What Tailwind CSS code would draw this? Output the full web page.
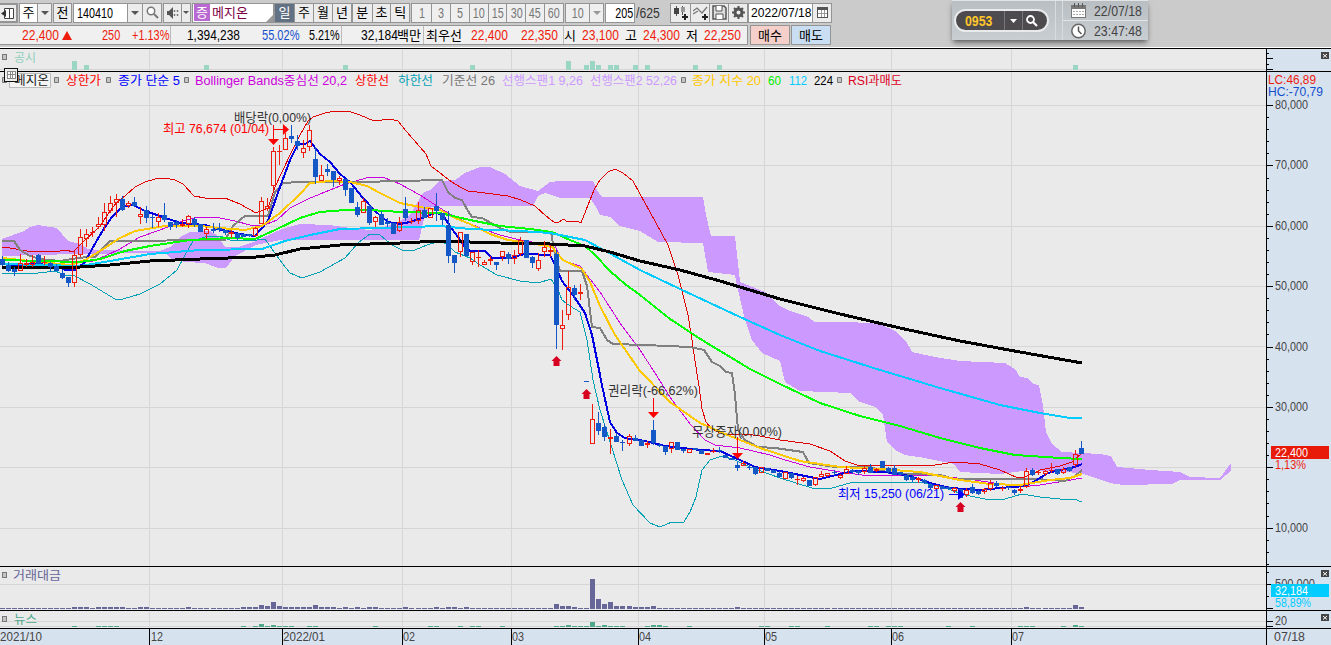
<!DOCTYPE html>
<html lang="ko">
<head>
    <meta charset="UTF-8">
    <title>메지온 140410</title>
    <script src="https://cdn.jsdelivr.net/npm/@tailwindcss/browser@4"></script>
</head>
<body class="w-[1331px] h-[645px] overflow-hidden bg-[#cbcbcb] font-['Liberation_Sans','Noto_Sans_CJK_KR',sans-serif] text-black">
<div class="relative flex flex-col w-[1331px] h-[645px]">

    <!-- Toolbar -->
    <div class="flex items-center h-6 pt-px text-[13px] leading-none whitespace-nowrap">
        <div class="flex items-center justify-center w-[18px] h-5 border-2 border-l-0 border-[#949494] bg-[#ececec]">
            <svg width="14" height="14" viewBox="0 0 14 14"><path d="M3.5 2.5h9v10h-9zM8.5 2.5v10" fill="#fff" stroke="#444"/><path d="M5 4v7L0 7.500z" fill="#333"/></svg>
        </div>
        <div class="flex ml-px w-[33px] h-5 border border-[#949494] bg-[#ececec]">
            <div class="flex items-center justify-center w-[18px] bg-white border-r border-[#949494]">주</div>
            <div class="flex flex-1 items-center justify-center"><svg width="8" height="4"><path d="M0 0h8L4 4z" fill="#555"/></svg></div>
        </div>
        <div class="flex items-center justify-center ml-px w-[19px] h-5 border border-[#949494] bg-[#ececec]">전</div>
        <div class="flex ml-px w-[89px] h-5 border border-[#949494] bg-[#ececec]">
            <div class="flex items-center w-[54px] pl-[3px] bg-white border-r border-[#949494]"><span class="origin-left scale-x-[.77] text-[14px]">140410</span></div>
            <div class="flex w-[15px] items-center justify-center border-r border-[#949494]"><svg width="8" height="4"><path d="M0 0h8L4 4z" fill="#555"/></svg></div>
            <div class="flex flex-1 items-center justify-center"><svg width="13" height="13"><circle cx="5" cy="5" r="3.700" fill="#fff" stroke="#777" stroke-width="1.500"/><path d="M8 8l4 4" stroke="#777" stroke-width="2"/></svg></div>
        </div>
        <div class="flex ml-px w-[28px] h-5 border border-[#949494] bg-[#ececec]">
            <div class="flex items-center justify-center w-[18px] border-r border-[#949494]"><svg width="13" height="12"><path d="M1 4h2l4-4v12L3 8H1z" fill="#555"/><path d="M8.500 3v2M8.500 7v2M11.500 3v2M11.500 7v2" stroke="#777" stroke-width="1.500"/></svg></div>
            <div class="flex flex-1 items-center justify-center"><svg width="6" height="3"><path d="M0 0h6L3 3z" fill="#555"/></svg></div>
        </div>
        <div class="relative flex items-center ml-px w-[82px] h-5 border border-[#949494] bg-white">
            <div class="flex items-center justify-center ml-px w-4 h-[17px] bg-[#b86ad2] text-white">증</div>
            <span class="ml-[2px] text-[#7b0042]">메지온</span>
            <svg class="absolute right-0 bottom-0" width="7" height="7"><path d="M7 0v7H0z" fill="#999"/></svg>
        </div>
        <div class="grid grid-cols-4 w-[78px] h-5 border border-[#949494] bg-[#ececec]">
            <div class="flex items-center justify-center bg-[#637184] text-white">일</div>
            <div class="flex items-center justify-center border-l border-[#949494]">주</div>
            <div class="flex items-center justify-center border-l border-[#949494]">월</div>
            <div class="flex items-center justify-center border-l border-[#949494]">년</div>
        </div>
        <div class="grid grid-cols-3 w-[58px] h-5 border border-[#949494] bg-[#ececec]">
            <div class="flex items-center justify-center">분</div>
            <div class="flex items-center justify-center border-l border-[#949494]">초</div>
            <div class="flex items-center justify-center border-l border-[#949494]">틱</div>
        </div>
        <div id="minutes" class="grid grid-cols-8 ml-px w-[153px] h-5 border border-[#949494] bg-[#efefef] text-[14px] text-[#777]"></div>
        <div class="flex ml-px w-[39px] h-5 border border-[#949494] bg-[#efefef] text-[#777]">
            <div class="flex items-center justify-center w-[24px] border-r border-[#949494]"><span class="scale-x-[.77] text-[14px]">10</span></div>
            <div class="flex flex-1 items-center justify-center"><svg width="8" height="4"><path d="M0 0h8L4 4z" fill="#999"/></svg></div>
        </div>
        <div class="flex items-center justify-end ml-px w-[30px] h-5 pr-px border border-[#949494] bg-white"><span class="origin-right scale-x-[.77] text-[14px]">205</span></div>
        <div class="w-[35px] pl-px text-[14px] text-[#333]"><span class="inline-block origin-left scale-x-[.87]">/625</span></div>
        <div class="grid grid-cols-4 w-[78px] h-5 border border-[#949494] bg-[#ececec]">
            <div class="flex items-center justify-center"><svg width="15" height="14"><path d="M3.500 0v10M9.500 0v9" stroke="#555"/><path d="M1 2h5v6H1z" fill="#444"/><path d="M8 1h4v5H8z" fill="#999"/><path d="M12 8v6M9 11h6" stroke="#222" stroke-width="2"/></svg></div>
            <div class="flex items-center justify-center border-l border-[#949494]"><svg width="15" height="14"><path d="M0 5l4-3 5 5 5-6M0 8l5-3" fill="none" stroke="#777" stroke-width="1.200"/><path d="M12 8v6M9 11h6" stroke="#222" stroke-width="2"/></svg></div>
            <div class="flex items-center justify-center border-l border-[#949494]"><svg width="15" height="15"><path d="M1 1h11l2 2v11H1z" fill="#ddd" stroke="#555" stroke-width="1.500"/><path d="M4 1v5h6V1M4 14V9h7v5" fill="#fff" stroke="#555"/></svg></div>
            <div class="flex items-center justify-center border-l border-[#949494]"><svg width="13" height="13"><circle cx="6.500" cy="6.500" r="3.500" fill="none" stroke="#555" stroke-width="3"/><path d="M6.500 0v3M6.500 10v3M0 6.500h3M10 6.500h3M2 2l2 2M9 9l2 2M2 11l2-2M9 4l2-2" stroke="#555" stroke-width="2"/></svg></div>
        </div>
        <div class="flex w-[84px] h-5 border border-[#949494] bg-[#ececec]">
            <div class="flex items-center w-[64px] pl-[2px] bg-white border-r border-[#949494]"><span class="origin-left scale-x-[.93]">2022/07/18</span></div>
            <div class="flex flex-1 items-center justify-center"><svg width="11" height="11" shape-rendering="crispEdges"><path d="M0 0h11v11H0z" fill="#555"/><path d="M1 3h9v7H1z" fill="#fff"/><path d="M4 3v7M7 3v7M1 6h9" stroke="#999"/></svg></div>
        </div>
    </div>

    <!-- Quote row -->
    <div class="flex h-[23px] pt-px whitespace-nowrap text-[14px] leading-none">
        <div class="flex items-center w-[748px] h-5 border-y border-r border-[#949494] bg-[#f0f0f0] text-[#ee1c0c]">
            <div class="w-[62px] pl-[22px]"><span class="inline-block origin-left scale-x-[.86]">22,400</span></div>
            <div class="w-[40px]"><svg width="10" height="9"><path d="M5 0l5 9H0z" fill="#ee1c0c"/></svg></div>
            <div class="w-[30px]"><span class="inline-block origin-left scale-x-[.78]">250</span></div>
            <div class="flex items-center w-[39px] h-full border-r border-[#bbb]"><span class="origin-left scale-x-[.78]">+1.13%</span></div>
            <div class="w-[91px] pl-4 text-black"><span class="inline-block origin-left scale-x-[.85]">1,394,238</span></div>
            <div class="w-[47px] text-[#1550cc]"><span class="inline-block origin-left scale-x-[.79]">55.02%</span></div>
            <div class="flex items-center w-[33px] h-full border-r border-[#bbb] text-black"><span class="origin-left scale-x-[.77]">5.21%</span></div>
            <div class="flex items-center w-[82px] h-full pl-[19px] border-r border-[#bbb] text-black"><span class="w-9 origin-left scale-x-[.86]">32,184</span><span class="text-[13px]">백만</span></div>
            <div class="w-[47px] pl-[2px] text-[13px] text-black">최우선</div>
            <div class="w-[50px]"><span class="inline-block origin-left scale-x-[.86]">22,400</span></div>
            <div class="flex items-center w-[43px] h-full border-r border-[#bbb]"><span class="origin-left scale-x-[.86]">22,350</span></div>
            <div class="w-[18px] text-[13px] text-black">시</div>
            <div class="w-[43px]"><span class="inline-block origin-left scale-x-[.86]">23,100</span></div>
            <div class="w-[18px] text-[13px] text-black">고</div>
            <div class="w-[43px]"><span class="inline-block origin-left scale-x-[.86]">24,300</span></div>
            <div class="w-[18px] text-[13px] text-black">저</div>
            <div class="w-[43px]"><span class="inline-block origin-left scale-x-[.86]">22,250</span></div>
        </div>
        <div class="flex items-center justify-center ml-[2px] w-10 h-5 border border-[#949494] bg-[#f5cfc9] text-[13px]">매수</div>
        <div class="flex items-center justify-center ml-px w-10 h-5 border border-[#949494] bg-[#c9def3] text-[13px]">매도</div>
    </div>
    <div class="h-px bg-white"></div>

    <!-- Disclosure panel -->
    <svg class="block" width="1331" height="23" viewBox="0 48 1331 23">
        <path d="M0 48h1331v23H0z" fill="#eaeaea"/>
        <path d="M1266 48h65v23h-65z" fill="#d7e2ef"/>
        <g class="vgrid"></g>
        <path d="M0 69.500h1266" stroke="#d6d6d6"/>
        <g id="disclosure" fill="#9bd5c3" shape-rendering="crispEdges"></g>
        <path d="M0 48.500h1331M1266.500 48v23M1267 53.500h2M1267 58.500h6M1267 64.500h2M1267 69.500h6" stroke="#000" shape-rendering="crispEdges"/>
        <rect x="2.500" y="54.500" width="4" height="5" fill="#c4c4c4" stroke="#777"/>
        <text x="14" y="62" font-size="12" fill="#8fcfbc" textLength="22" lengthAdjust="spacingAndGlyphs">공시</text>
        <path d="M1321 52h8v7h-8z" fill="#444"/><path d="M1323 54l4 3.500m0-3.500l-4 3.500" stroke="#fff"/>
    </svg>

    <!-- Price panel -->
    <svg class="block" width="1331" height="495" viewBox="0 71 1331 495">
        <path d="M0 71h1331v495H0z" fill="#eaeaea"/>
        <path d="M1266 71h65v495h-65z" fill="#d7e2ef"/>
        <g class="vgrid"></g>
        <path d="M0 105.500h1266M0 165.500h1266M0 226.500h1266M0 286.500h1266M0 346.500h1266M0 407.500h1266M0 467.500h1266M0 528.500h1266" stroke="#d6d6d6" shape-rendering="crispEdges"/>

        <!-- Ichimoku cloud -->
        <g fill="#cc99ff" shape-rendering="crispEdges">
            <path d="M2 239L13 235 24 231 30 227 38 225 57 228 68 241 80 244 88 249 100 250 160 251 170 247 180 237 190 232 210 231 218 236 225 247 238 247 256 241 275 232 285 228 300 224 330 225 350 228 370 230 395 224 410 215 420 198 424 192 430 190 440 181 455 180 465 173 480 167 490 167 505 174 520 186 538 191 550 182 560 181 593 181 597 190 602 197 703 197 706 215 711 236 735 236 740 282 765 292 780 306 790 311 808 317 815 322 850 322 880 324 895 331 906 341 912 352 935 357 960 361 1005 363 1015 369 1020 377 1027 378 1033 384 1039 385 1043 405 1046 432 1052 444 1062 452 1100 454 1111 456 1117 467 1150 470 1180 472 1190 477 1220 478 1231 463V471L1220 480 1180 480 1172 484 1123 485 1110 483 1092 477 1080 473 1030 470 1000 474 960 472 954 464 925 458 905 455 895 450 887 442 883 414 875 407 860 402 850 393 800 391 785 382 780 361 762 353 752 340 745 320 738 290 735 275 708 272 703 243 658 242 640 231 620 226 610 217 600 215 596 207 590 198 560 198 545 193 538 196 533 206 435 206 429 208 424 219 419 240 280 240 256 245 235 256 226 268 218 268 205 263 185 262 172 259 165 253 75 254 2 256z"/>
        </g>

        <g fill="none" shape-rendering="crispEdges">
            <path stroke="#00a0b4" d="M2 273L30 274 55 271 65 275 75 276 90 284 105 293 115 299 123 299 140 294 160 284 177 270 185 255 193 241 205 237 220 236 230 240 250 241 265 239 272 249 282 263 290 273 302 278 320 272 345 258 358 243 370 234 380 235 392 245 402 250 415 250 427 245 440 241 448 245 455 252 470 258 480 265 497 275 520 281 538 283 551 279 558 290 562 300 570 306 580 312 587 340 593 380 600 410 611 445 622 480 633 505 650 523 660 527 672 522 684 522 690 512 696 497 702 470 710 460 722 456 735 460 750 467 780 478 812 488 832 488 850 483 880 482 920 482 945 488 965 495 985 499 1005 499 1022 494 1040 497 1060 499 1074 499 1082 502"/>
            <path stroke="#cc00dd" d="M2 260L50 261 90 262 105 256 120 249 140 237 160 230 180 222 197 217 215 217 235 221 250 225 262 226 277 220 290 208 308 199 325 192 345 184 370 177 385 178 400 184 420 195 440 208 455 217 480 228 500 235 520 240 555 246 562 260 580 266 600 292 620 323 640 350 655 373 670 397 690 424 705 440 715 445 740 448 770 455 785 460 810 467 840 472 862 475 930 475 975 480 1000 484 1020 487 1040 485 1065 481 1082 478"/>
            <path stroke="#e00000" d="M2 247L10 248 27 251 60 251 66 250 73 252 80 245 100 226 108 214 117 202 126 195 135 187 145 182 155 179 165 178 175 180 183 184 194 196 205 198 225 198 240 204 256 213 268 208 275 187 282 172 291 153 300 135 308 121 313 117 325 113 335 111 348 111 360 115 374 121 390 119 398 121 406 131 420 147 426 154 431 166 440 173 452 182 460 187 468 191 485 193 508 196 521 200 535 206 546 216 554 222 558 223 563 219 568 222 577 221 581 223 588 205 594 190 600 180 608 172 615 169 623 173 633 181 640 194 650 212 668 245 678 275 688 315 692 340 695 361 699 386 702 409 706 422 712 429 725 435 745 434 760 436 780 440 810 444 830 451 845 461 857 465 880 466 905 465 935 465 955 462 980 464 1000 470 1018 478 1025 477 1040 470 1060 466 1072 462 1082 453"/>
            <path stroke="#808080" stroke-width="2" d="M2 241L14 241 20 250 30 256 40 259 60 261 78 258 88 257 95 257 104 247 110 241 225 240 233 226 240 220 245 216 268 216 275 192 283 183 300 182 360 182 400 181 442 180 448 192 455 198 462 200 468 211 472 217 482 218 500 228 510 232 551 232 554 250 560 271 582 271 587 286 592 327 600 328 607 340 613 344 645 345 690 347 704 350 712 362 720 366 726 372 732 373 735 395 738 430 745 440 758 447 775 448 803 452 809 463 835 467 870 467 890 473 940 475 955 479 1035 479 1065 481 1075 476 1082 470"/>
            <path stroke="#0000e0" stroke-width="2" d="M2 263L15 266 30 264 55 265 65 270 75 270 85 262 92 249 103 230 112 217 122 207 133 205 145 211 160 216 180 223 205 225 218 229 240 234 255 236 268 221 280 187 290 160 298 144 305 144 310 141 320 154 330 162 340 174 350 182 363 198 375 211 388 222 400 224 410 222 425 217 435 213 442 214 450 226 458 237 464 246 470 251 485 251 492 258 510 258 525 254 550 255 555 265 562 281 575 298 585 313 592 335 603 390 610 422 617 433 625 438 645 441 665 446 700 450 720 451 740 460 755 467 780 471 800 475 820 479 840 474 855 471 885 472 910 476 930 483 950 488 980 490 1000 488 1025 486 1035 481 1048 473 1065 469 1075 467 1082 464"/>
            <path stroke="#ffc800" stroke-width="2" d="M2 258L20 260 70 265 85 260 100 251 120 238 135 231 165 226 200 226 220 228 245 230 262 226 280 213 300 194 310 183 330 181 350 182 367 186 380 193 400 203 420 207 440 210 455 218 470 224 490 234 508 240 530 243 552 247 563 260 582 269 590 282 600 306 615 335 640 371 670 402 700 423 730 436 760 448 800 461 840 467 880 469 920 472 960 480 990 484 1020 485 1050 480 1070 478 1082 474"/>
            <path stroke="#00ff00" stroke-width="2" d="M2 260L40 261 80 262 100 259 125 251 150 246 190 240 230 238 255 239 275 230 300 218 320 212 345 210 370 210 400 212 440 213 470 220 500 226 530 229 552 232 570 240 585 246 595 255 610 271 625 284 640 295 670 319 702 340 750 369 780 384 820 403 860 416 900 426 940 438 980 448 1015 455 1060 458 1082 459"/>
            <path stroke="#00ccff" stroke-width="2" d="M2 264L80 266 110 261 150 254 200 250 262 249 285 241 310 235 340 229 380 228 440 226 470 229 520 231 550 233 585 240 600 248 620 259 640 270 680 289 740 317 780 335 820 351 880 370 940 388 1000 405 1040 413 1070 418 1082 418"/>
            <path stroke="#000" stroke-width="3" d="M2 267L80 267 110 265 150 261 200 259 256 257 275 255 300 249 340 245 400 243 440 241 500 243 550 244 585 246 610 252 640 261 680 270 720 281 780 299 840 314 900 328 960 341 1020 352 1082 363"/>
        </g>

        <g id="candles" shape-rendering="crispEdges"></g>

        <!-- Signals -->
        <g fill="#d80020">
            <path d="M556.500 356l5 5h-2v5h-6v-5h-2zM586.500 389l5 5h-2v5h-6v-5h-2zM960.500 502l5 5h-2v5h-6v-5h-2z"/>
            <path fill="#f00" d="M268 139h11l-5.500 6zM283 124l6 5.500-6 5.500zM648 412h11l-5.500 6zM732 453h11l-5.500 6z"/>
            <path fill="#00f" d="M958 489l7 5.500-7 5.500z"/>
            <path stroke="#f00" d="M273.500 125v14M273 129.500h10M653.500 398v14M737.500 437v16" shape-rendering="crispEdges"/>
            <path stroke="#00f" d="M949 494.500h10"/>
        </g>
        <g font-size="13" fill="#333">
            <text x="234" y="122" textLength="77" lengthAdjust="spacingAndGlyphs">배당락(0,00%)</text>
            <text x="163" y="133" textLength="106" lengthAdjust="spacingAndGlyphs" fill="#f00">최고 76,674 (01/04)</text>
            <text x="608" y="395" textLength="90" lengthAdjust="spacingAndGlyphs">권리락(-66,62%)</text>
            <text x="692" y="436" textLength="90" lengthAdjust="spacingAndGlyphs">무상증자(0,00%)</text>
            <text x="838" y="498" textLength="106" lengthAdjust="spacingAndGlyphs" fill="#00f">최저 15,250 (06/21)</text>
        </g>

        <!-- Legend -->
        <path d="M2.500 77.500h4v5h-4zM54.500 77.500h4v5h-4zM106.500 77.500h4v5h-4zM184.500 77.500h4v5h-4zM681.500 77.500h4v5h-4zM837.500 77.500h4v5h-4z" fill="#c4c4c4" stroke="#777"/>
        <path d="M9.500 73.500h41v14h-41z" fill="#f4f4f4" stroke="#bbb"/>
        <g font-size="12">
            <text x="14" y="85" textLength="35" lengthAdjust="spacingAndGlyphs" fill="#222">메지온</text>
            <text x="66" y="85" textLength="35" lengthAdjust="spacingAndGlyphs" fill="#f00">상한가</text>
            <text x="118" y="85" textLength="62" lengthAdjust="spacingAndGlyphs" fill="#00f">종가 단순 5</text>
            <text x="195" y="85" textLength="152" lengthAdjust="spacingAndGlyphs" fill="#cc00dd">Bollinger Bands중심선 20,2</text>
            <text x="355" y="85" textLength="34" lengthAdjust="spacingAndGlyphs" fill="#f00">상한선</text>
            <text x="398" y="85" textLength="35" lengthAdjust="spacingAndGlyphs" fill="#00a0b4">하한선</text>
            <text x="442" y="85" textLength="53" lengthAdjust="spacingAndGlyphs" fill="#777">기준선 26</text>
            <text x="502" y="85" textLength="81" lengthAdjust="spacingAndGlyphs" fill="#cc99ff">선행스팬1 9,26</text>
            <text x="590" y="85" textLength="87" lengthAdjust="spacingAndGlyphs" fill="#cc99ff">선행스팬2 52,26</text>
            <text x="692" y="85" textLength="69" lengthAdjust="spacingAndGlyphs" fill="#ffc800">종가 지수 20</text>
            <text x="768" y="85" textLength="13" lengthAdjust="spacingAndGlyphs" fill="#00ee00">60</text>
            <text x="789" y="85" textLength="18" lengthAdjust="spacingAndGlyphs" fill="#00ccff">112</text>
            <text x="814" y="85" textLength="19" lengthAdjust="spacingAndGlyphs">224</text>
            <text x="848" y="85" textLength="54" lengthAdjust="spacingAndGlyphs" fill="#dd0022">RSI과매도</text>
        </g>

        <!-- Price axis -->
        <path d="M0 71.500h1331M1266.500 71v495" stroke="#000" shape-rendering="crispEdges"/>
        <g id="priceTicks" stroke="#000" shape-rendering="crispEdges"></g>
        <g id="priceLabels" font-size="13" fill="#444"></g>
        <g font-size="13">
            <text x="1268" y="84" textLength="48" lengthAdjust="spacingAndGlyphs" fill="#ee1c0c">LC:46,89</text>
            <text x="1268" y="96" textLength="55" lengthAdjust="spacingAndGlyphs" fill="#1550cc">HC:-70,79</text>
            <text x="1275" y="469" textLength="31" lengthAdjust="spacingAndGlyphs" fill="#ee1c0c">1,13%</text>
            <path d="M1271 446h58v13h-58z" fill="#e81a0a"/>
            <text x="1275" y="457" textLength="33" lengthAdjust="spacingAndGlyphs" fill="#fff">22,400</text>
        </g>
    </svg>

    <!-- Trading value panel -->
    <svg class="block" width="1331" height="44" viewBox="0 566 1331 44">
        <path d="M0 566h1331v44H0z" fill="#eaeaea"/>
        <path d="M1266 566h65v44h-65z" fill="#d7e2ef"/>
        <g class="vgrid"></g>
        <path d="M0 584.500h1266" stroke="#d6d6d6"/>
        <g id="value" fill="#666699" shape-rendering="crispEdges"></g>
        <path d="M0 566.500h1331M1266.500 566v44M1267 572.500h2M1267 584.500h6M1267 596.500h2M1267 608.500h6" stroke="#000" shape-rendering="crispEdges"/>
        <rect x="2.500" y="572.500" width="4" height="5" fill="#c4c4c4" stroke="#777"/>
        <text x="13" y="580" font-size="12" fill="#666699" textLength="48" lengthAdjust="spacingAndGlyphs">거래대금</text>
        <g font-size="13">
            <text x="1275" y="587.500" textLength="40" lengthAdjust="spacingAndGlyphs" fill="#444">500,000</text>
            <path d="M1271 584h58v13h-58z" fill="#00ccff"/>
            <text x="1275" y="595" textLength="33" lengthAdjust="spacingAndGlyphs" fill="#fff">32,184</text>
            <text x="1275" y="607" textLength="36" lengthAdjust="spacingAndGlyphs" fill="#00ccff">58,89%</text>
        </g>
        <path d="M1321 570h8v7h-8z" fill="#444"/><path d="M1323 572l4 3.500m0-3.500l-4 3.500" stroke="#fff"/>
    </svg>

    <!-- News panel -->
    <svg class="block" width="1331" height="18" viewBox="0 610 1331 18">
        <path d="M0 610h1331v18H0z" fill="#eaeaea"/>
        <path d="M1266 610h65v18h-65z" fill="#d7e2ef"/>
        <g class="vgrid"></g>
        <path d="M0 621.500h1266M0 626.500h1266" stroke="#d6d6d6"/>
        <g id="news" fill="#4fa88c" shape-rendering="crispEdges"></g>
        <path d="M0 610.500h1331M1266.500 610v18M1267 621.500h6M1267 626.500h6" stroke="#000" shape-rendering="crispEdges"/>
        <rect x="2.500" y="616.500" width="4" height="5" fill="#c4c4c4" stroke="#777"/>
        <text x="14" y="624" font-size="12" fill="#4fa88c" textLength="23" lengthAdjust="spacingAndGlyphs">뉴스</text>
        <text x="1275" y="625" font-size="13" fill="#444" textLength="12" lengthAdjust="spacingAndGlyphs">20</text>
        <path d="M1321 614h8v7h-8z" fill="#444"/><path d="M1323 616l4 3.500m0-3.500l-4 3.500" stroke="#fff"/>
    </svg>

    <!-- Date axis -->
    <svg class="block" width="1331" height="17" viewBox="0 628 1331 17">
        <path d="M0 628h1331v17H0z" fill="#d7e2ef"/>
        <path d="M0 628.500h1331M149.500 628v17M282.500 628v17M402.500 628v17M511.500 628v17M638.500 628v17M764.500 628v17M891.500 628v17M1011.500 628v17M1266.500 628v17" stroke="#000" shape-rendering="crispEdges"/>
        <g font-size="13" fill="#444">
            <text x="0" y="641" textLength="42" lengthAdjust="spacingAndGlyphs">2021/10</text>
            <text x="151" y="641" textLength="12" lengthAdjust="spacingAndGlyphs">12</text>
            <text x="283" y="641" textLength="42" lengthAdjust="spacingAndGlyphs">2022/01</text>
            <text x="403" y="641" textLength="12" lengthAdjust="spacingAndGlyphs">02</text>
            <text x="512" y="641" textLength="12" lengthAdjust="spacingAndGlyphs">03</text>
            <text x="639" y="641" textLength="12" lengthAdjust="spacingAndGlyphs">04</text>
            <text x="765" y="641" textLength="12" lengthAdjust="spacingAndGlyphs">05</text>
            <text x="892" y="641" textLength="12" lengthAdjust="spacingAndGlyphs">06</text>
            <text x="1012" y="641" textLength="12" lengthAdjust="spacingAndGlyphs">07</text>
            <text x="1274" y="641" textLength="31" lengthAdjust="spacingAndGlyphs">07/18</text>
        </g>
    </svg>

    <!-- Grid handle over the panel border -->
    <svg class="absolute left-1 top-[68px]" width="14" height="14" shape-rendering="crispEdges"><path d="M.5.5h13v13H.5z" fill="#eee" stroke="#111"/><path d="M3 3.500h8v7H3zM3 6h8M6 3v8M8.500 3v8" fill="#fff" stroke="#888"/></svg>

    <!-- Floating clock -->
    <div class="absolute left-[952px] top-0 flex w-[196px] h-10 bg-linear-to-b from-[#b9bec3] to-[#c9ced2] border-t border-[#e2e4e6] shadow-md shadow-black/40 text-[14px] leading-none text-[#444]">
        <div class="flex items-center mt-[8px] ml-[2px] w-[95px] h-[23px] rounded-full border-2 border-[#e8eaeb] bg-[#4e4b4f]">
            <div class="flex items-center w-[49px] h-full pl-[9px] border-r border-[#77757a] font-bold text-[#ffc62a]"><span class="origin-left scale-x-[.88]">0953</span></div>
            <div class="flex items-center justify-center w-[18px] h-full border-r border-[#77757a]"><svg width="7" height="4"><path d="M0 0h7L3.500 4z" fill="#fff"/></svg></div>
            <svg class="ml-[3px]" width="12" height="12"><circle cx="4.500" cy="4.500" r="3.500" fill="none" stroke="#fff" stroke-width="1.800"/><path d="M7 7l4 4" stroke="#fff" stroke-width="2.200"/></svg>
        </div>
        <div class="ml-[6px] w-[7px] border-l border-[#d9dcdf]"></div>
        <div class="flex-1 border-l border-[#d9dcdf]">
            <div class="flex items-center h-[20px] pl-2 border-b border-[#e2e4e6]">
                <svg width="16" height="16" shape-rendering="crispEdges"><path d="M0 2h15v13H0z" fill="#777"/><path d="M1 6h13v8H1z" fill="#fff"/><path d="M3.500 0v4M7.500 0v4M11.500 0v4" stroke="#555"/><path d="M2 8.500h11M2 11.500h11" stroke="#aaa" stroke-dasharray="2 1"/></svg>
                <span class="ml-[7px] origin-left scale-x-[.88]">22/07/18</span>
            </div>
            <div class="flex items-center h-[19px] pl-2">
                <svg width="16" height="16"><circle cx="7.500" cy="8" r="6.700" fill="#fff" stroke="#666" stroke-width="1.500"/><path d="M7.500 3.500V8l3 3" fill="none" stroke="#555" stroke-width="1.500"/></svg>
                <span class="ml-[7px] origin-left scale-x-[.88]">23:47:48</span>
            </div>
        </div>
    </div>
</div>

<script>
    const barX = i => 2 + 6 * i + Math.floor(i * 0.029);

    document.getElementById('minutes').innerHTML = [1, 3, 5, 10, 15, 30, 45, 60].map((m, i) =>
        `<div class="flex items-center justify-center ${i ? 'border-l border-[#949494]' : ''}"><span class="scale-x-[.77]">${m}</span></div>`).join('');

    document.querySelectorAll('.vgrid').forEach(g => {
        g.innerHTML = [149, 282, 402, 511, 638, 764, 891, 1011]
            .map(x => `<rect x="${x}" y="48" width="1" height="580" fill="#d6d6d6"/>`).join('');
    });

    // direction, high, body top, body bottom, low
    const candles = `b256,259,265,266 b262,265,271,272 b267,269,272,276 r254,263,271,271 r259,263,265,267 r255,262,265,267 b254,255,264,264 r256,262,263,265
b262,263,267,272 b264,266,271,271 b270,273,278,279 b277,277,283,287 r251,255,283,287 r229,237,255,257 r229,234,239,247 r227,232,233,237
r217,224,227,229 r203,212,225,231 r196,203,211,213 r194,199,203,217 b196,199,210,211 r201,203,206,208 b197,202,206,206 r207,214,217,224
b206,210,218,223 b215,217,218,228 r213,217,222,227 b203,215,220,222 b222,222,227,230 b220,222,225,228 r219,224,226,227 r215,216,224,228
b217,219,225,227 b224,224,232,232 r227,229,234,239 b223,229,231,233 b223,228,230,232 b230,230,233,235 r230,232,234,238 b233,233,238,240
b234,234,237,237 b234,234,236,237 r227,228,236,237 r197,201,224,224 r198,206,209,211 r147,151,186,192 r145,151,152,165 r133,138,150,150
b125,136,139,143 b135,141,146,150 r140,148,153,158 r125,130,147,151 b147,159,177,184 r165,175,181,181 b164,169,172,176 b171,171,180,187
r176,178,181,185 b179,179,190,196 b188,188,203,203 b202,207,215,217 r198,201,213,213 b205,206,223,225 r216,217,222,227 b211,214,225,225
b218,222,224,227 b223,223,234,234 r217,222,231,232 b197,209,218,221 r218,221,222,224 r202,210,221,224 b207,210,218,218 r208,208,218,218
b193,206,211,221 b213,213,220,225 b211,225,256,263 b255,255,263,273 r232,232,252,257 b234,234,256,256 r252,252,262,265 r250,257,258,267
r260,262,265,265 r256,259,261,265 b262,262,265,270 r251,251,257,261 b252,254,259,264 r250,255,259,264 r237,240,254,256 b240,240,258,258
b256,257,263,268 r253,260,269,271 r241,247,252,257 r245,250,252,257 b250,254,325,349 r310,325,329,350 r271,287,315,320 b285,288,295,300
r284,292,294,300 b381,381,382,382 r404,419,444,444 b412,423,431,435 b424,427,437,441 r429,437,439,454 b433,436,442,442 b440,442,443,451
r434,436,444,446 b435,438,441,441 b440,440,446,446 r441,443,445,448 b420,430,443,445 b443,445,446,447 b446,446,452,455 r442,442,449,453
b442,442,450,450 b449,449,451,453 r449,449,453,453 b448,448,450,450 b450,450,454,454 r453,453,455,455 r448,451,452,453 b447,450,451,453
b455,455,458,458 b458,458,460,460 b462,465,468,471 r461,463,466,466 b464,467,468,470 b467,467,474,475 r467,467,473,473 b468,468,471,471
b470,470,473,473 b471,473,477,478 r472,472,479,479 b473,473,478,479 r476,479,480,485
r477,478,481,482 b480,480,486,486 r477,477,485,486 r471,474,477,477 r473,473,476,477 b470,472,473,475 r474,475,478,479 r466,469,474,474
b469,470,472,474 b470,471,473,475 r466,468,472,474 b464,467,473,473 r468,469,471,472 b461,461,468,468 b467,468,472,474 b465,468,475,475
b472,472,475,475 b475,475,480,481 b475,477,480,482 r477,478,480,483 b479,480,483,484 b483,485,488,489 r485,485,489,489 b486,486,489,489
b486,487,489,490 r487,488,491,493 b489,489,498,498 r488,490,495,497 b484,487,493,494 b490,491,494,495 r488,489,492,494 r480,483,489,491
b481,483,486,487 r486,488,489,491 b486,487,488,490 b489,490,493,495 r486,489,491,493 r468,471,487,488 b468,470,475,476 r470,472,473,475
r470,471,474,476 r463,470,471,473 b469,469,474,475 r467,469,473,474 b467,467,471,472 r450,454,465,467 b441,448,454,454`.split(/\s+/);

    document.getElementById('candles').innerHTML = candles.map((c, i) => {
        const [high, top, bottom, low] = c.slice(1).split(',').map(Number);
        const x = barX(i);
        if (c[0] === 'b') {
            return `<path d="M${x} ${high}h1v${low - high}h-1zM${x - 2} ${top}h5v${bottom - top}h-5z" fill="#1458c8"/>`;
        }
        const body = bottom - top < 2
            ? `M${x - 2} ${top}.5h5`
            : `M${x - 1.5} ${top}.5h4v${bottom - top - 1}h-4z`;
        return `<path d="M${x}.5 ${high}V${top}M${x}.5 ${bottom}V${low}${body}" fill="none" stroke="#ee1c0c"/>`;
    }).join('');

    // index:height pairs on a common baseline
    function bars(id, baseline, data) {
        document.getElementById(id).innerHTML = Object.entries(data)
            .map(([i, h]) => `<rect x="${barX(+i) - 2}" y="${baseline - h}" width="5" height="${h}"/>`).join('');
    }

    const value = {};
    for (let i = 0; i < 180; i++) value[i] = 1;
    [12, 13, 14, 16, 17, 18, 19, 20, 23, 24, 31, 40, 41, 42, 47, 48, 49, 50, 51, 53, 54, 55, 57, 59, 61, 62, 67, 72,
        74, 75, 77, 95, 105, 106, 107, 122, 170, 179].forEach(i => value[i] = 2);
    Object.assign(value, {43: 4, 44: 3, 45: 7, 46: 3, 52: 4, 92: 5, 93: 3, 94: 3, 98: 30, 99: 10, 100: 5, 101: 7,
        102: 3, 103: 3, 104: 3, 108: 3, 178: 4});
    bars('value', 609, value);

    const news = {};
    [12, 16, 17, 18, 19, 40, 42, 44, 46, 47, 48, 51, 52, 62, 71, 72, 76, 78, 79, 83, 92, 93, 95, 96, 97, 99, 101, 102,
        103, 107, 110, 114, 126, 127, 131, 132, 137, 144, 145, 147, 148, 149, 157, 161, 169, 170, 171, 176, 179]
        .forEach(i => news[i] = 1);
    Object.assign(news, {43: 3, 45: 2, 94: 2, 98: 5, 100: 2, 108: 2, 109: 2, 178: 2});
    bars('news', 627, news);

    bars('disclosure', 70, {12: 9, 14: 5, 34: 5, 57: 5, 78: 5, 94: 9, 97: 5, 98: 9, 99: 5, 101: 5, 102: 5, 105: 5,
        107: 5, 115: 5, 119: 5, 178: 5});

    // price axis: a tick every 2,000, a label every 10,000
    let ticks = '', labels = '';
    for (let p = 4000; p <= 80000; p += 2000) {
        const y = Math.round(588 - p * 0.006036) + 0.5;
        ticks += `<path d="M1267 ${y}h${p % 10000 ? 2 : 6}"/>`;
        if (p % 10000 === 0 && p !== 20000) {
            labels += `<text x="1275" y="${y + 3.5}" textLength="33" lengthAdjust="spacingAndGlyphs">${p / 1000},000</text>`;
        }
    }
    document.getElementById('priceTicks').innerHTML = ticks;
    document.getElementById('priceLabels').innerHTML = labels;
</script>
</body>
</html>
